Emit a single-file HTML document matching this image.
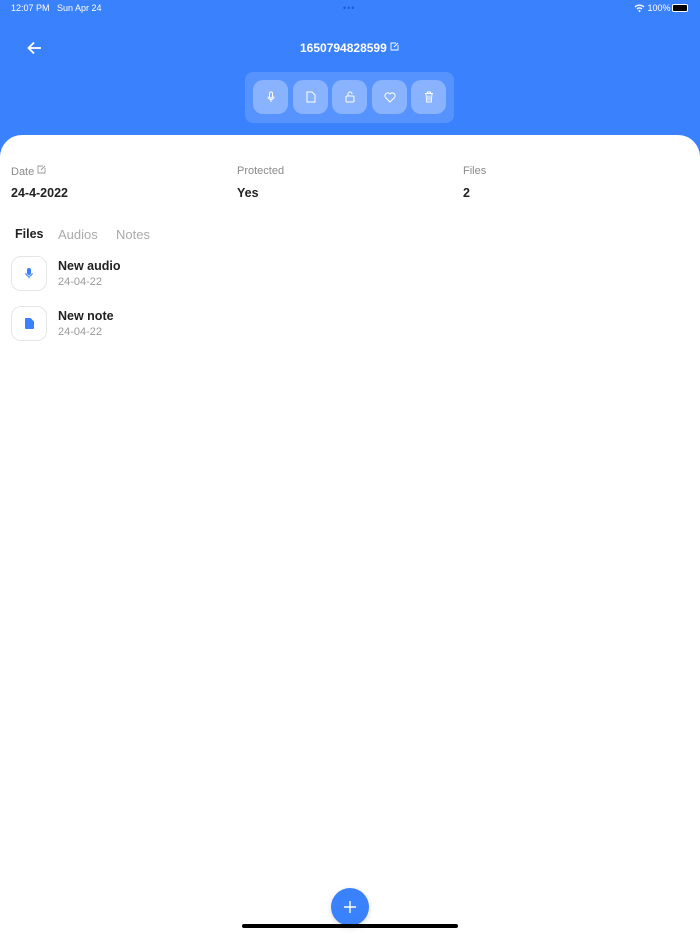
<!DOCTYPE html>
<html><head><style>
*{margin:0;padding:0;box-sizing:border-box}
body{width:700px;height:934px;background:#3a81fe;font-family:"Liberation Sans",sans-serif;position:relative;overflow:hidden}
.abs{position:absolute}
.sheet{position:absolute;left:0;top:135px;width:700px;height:799px;background:#fff;border-radius:22px 22px 0 0}
.btn{position:absolute;top:80px;width:35px;height:34px;border-radius:10px;background:rgba(255,255,255,.3);display:flex;align-items:center;justify-content:center}
.lbl{font-size:11px;color:#8a8a8a}
.val{font-size:12.5px;font-weight:bold;color:#222}
.ic{position:absolute;left:11px;width:36px;height:35px;border:1px solid #e6e6e6;border-radius:10px;display:flex;align-items:center;justify-content:center}
.t{font-size:12.5px;font-weight:bold;color:#222}
.d{font-size:11px;color:#999}
</style></head><body>
<div class="abs" style="left:11px;top:3px;font-size:9px;color:#fff">12:07 PM&nbsp;&nbsp;&nbsp;Sun Apr 24</div>
<div class="abs" style="left:343px;top:3px;font-size:9px;color:#1d5ad0;letter-spacing:1px">•••</div>
<div class="abs" style="left:634px;top:3px;font-size:9px;color:#fff">
<svg width="11" height="8" viewBox="0 0 11 8" style="vertical-align:-1px"><path d="M1 3a6.5 6.5 0 0 1 9 0M3 5a3.5 3.5 0 0 1 5 0" stroke="#fff" stroke-width="1.3" fill="none"/><circle cx="5.5" cy="7" r="1" fill="#fff"/></svg> 100%</div>
<div class="abs" style="left:672px;top:4px;width:16px;height:8px;background:#000;border-radius:2px;border:1px solid #fff"></div>
<svg class="abs" style="left:27px;top:41px" width="15" height="14" viewBox="0 0 15 14"><path d="M14 7H2M7 1.5L1.5 7 7 12.5" stroke="#fff" stroke-width="1.8" fill="none"/></svg>
<div class="abs" style="left:300px;top:41px;font-size:12px;font-weight:bold;color:#fff">1650794828599</div>
<svg class="abs" style="left:390px;top:42px" width="9" height="9" viewBox="0 0 9 9"><path d="M6 1H1v7h7V3M4 5l4-4" stroke="#fff" stroke-width=".9" fill="none"/></svg>
<div class="abs" style="left:245px;top:72px;width:209px;height:51px;border-radius:8px;background:rgba(255,255,255,.15)"></div>
<div class="btn" style="left:253px"><svg width="10" height="12" viewBox="0 0 10 12"><rect x="3.5" y="1" width="3" height="6" rx="1.5" stroke="#fff" fill="none"/><path d="M2 5.5a3 3 0 0 0 6 0M5 8.5V11" stroke="#fff" fill="none"/></svg></div>
<div class="btn" style="left:293px"><svg width="10" height="12" viewBox="0 0 10 12"><path d="M1 1h5l3 3v7H1z" stroke="#fff" fill="none"/></svg></div>
<div class="btn" style="left:332px"><svg width="10" height="12" viewBox="0 0 10 12"><rect x="1" y="5" width="8" height="6" rx="1" stroke="#fff" fill="none"/><path d="M3 5V3a2 2 0 0 1 4 0" stroke="#fff" fill="none"/></svg></div>
<div class="btn" style="left:372px"><svg width="12" height="11" viewBox="0 0 12 11"><path d="M6 10L1.5 5.5a2.5 2.5 0 0 1 4.5-3.5 2.5 2.5 0 0 1 4.5 3.5z" stroke="#fff" fill="none"/></svg></div>
<div class="btn" style="left:411px"><svg width="10" height="12" viewBox="0 0 10 12"><path d="M1 2.5h8M3.5 2.5V1h3v1.5M2 2.5l.7 8.5h4.6L8 2.5M4 4.5v5M6 4.5v5" stroke="#fff" stroke-width=".9" fill="none"/></svg></div>
<div class="sheet"></div>
<div class="abs lbl" style="left:11px;top:165px">Date <svg width="9" height="9" viewBox="0 0 9 9" style="vertical-align:1px"><path d="M6 1H1v7h7V3M4 5l4-4" stroke="#999" stroke-width=".9" fill="none"/></svg></div>
<div class="abs lbl" style="left:237px;top:165px">Protected</div>
<div class="abs lbl" style="left:463px;top:165px">Files</div>
<div class="abs val" style="left:11px;top:186px">24-4-2022</div>
<div class="abs val" style="left:237px;top:186px">Yes</div>
<div class="abs val" style="left:463px;top:186px">2</div>
<div class="abs" style="left:15px;top:227px;font-size:12.5px;font-weight:bold;color:#222">Files</div>
<div class="abs" style="left:58px;top:227px;font-size:13px;color:#aaa">Audios</div>
<div class="abs" style="left:116px;top:227px;font-size:13px;color:#aaa">Notes</div>
<div class="ic" style="top:256px"><svg width="8" height="11" viewBox="0 0 8 11"><rect x="2" y="0" width="4" height="7" rx="2" fill="#3a81fe"/><path d="M.8 5a3.2 3.2 0 0 0 6.4 0M4 8.5V10.5" stroke="#3a81fe" fill="none"/></svg></div>
<div class="abs t" style="left:58px;top:259px">New audio</div>
<div class="abs d" style="left:58px;top:276px">24-04-22</div>
<div class="ic" style="top:306px"><svg width="9" height="11" viewBox="0 0 9 11"><path d="M0 1a1 1 0 0 1 1-1h4.5L9 3.5V10a1 1 0 0 1-1 1H1a1 1 0 0 1-1-1z" fill="#3a81fe"/></svg></div>
<div class="abs t" style="left:58px;top:309px">New note</div>
<div class="abs d" style="left:58px;top:326px">24-04-22</div>
<div class="abs" style="left:331px;top:888px;width:38px;height:38px;border-radius:50%;background:#3a81fe;box-shadow:0 2px 6px rgba(0,0,0,.15)"></div>
<svg class="abs" style="left:343px;top:900px" width="14" height="14" viewBox="0 0 14 14"><path d="M7 1v12M1 7h12" stroke="#fff" stroke-width="1.4"/></svg>
<div class="abs" style="left:242px;top:924px;width:216px;height:4px;border-radius:2px;background:#000"></div>
</body></html>
